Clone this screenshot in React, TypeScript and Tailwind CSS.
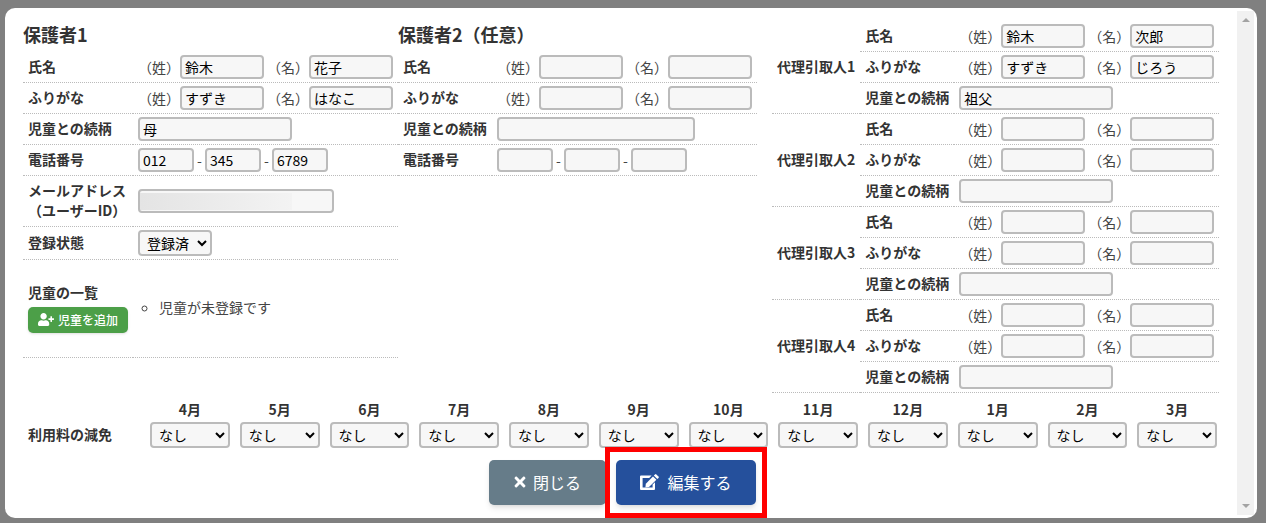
import type { ReactNode } from 'react';
import { FaTimes, FaUserPlus } from 'react-icons/fa';

type Agent = { sei: string; mei: string; seiKana: string; meiKana: string; relation: string };

const EMPTY_AGENT: Agent = { sei: '', mei: '', seiKana: '', meiKana: '', relation: '' };
const AGENTS: Agent[] = [
  { sei: '鈴木', mei: '次郎', seiKana: 'すずき', meiKana: 'じろう', relation: '祖父' },
  EMPTY_AGENT,
  EMPTY_AGENT,
  EMPTY_AGENT,
];
const MONTHS = [4, 5, 6, 7, 8, 9, 10, 11, 12, 1, 2, 3];

const field = 'h-6 rounded-sm border-2 border-[#bbb] bg-[#f7f7f7] px-[3px] text-black';
const select = 'h-[26px] rounded-sm border-2 border-[#bbb] bg-[#f7f7f7] px-[3px] text-black';
const dotted = 'border-b border-dotted border-[#bbb]';

function Th({ children, rowSpan, className = 'w-[94px]' }: { children: ReactNode; rowSpan?: number; className?: string }) {
  return (
    <th scope="row" rowSpan={rowSpan} className={`${dotted} ${className} px-[5px] pt-[3px] pb-[5px] text-left font-bold whitespace-nowrap`}>
      {children}
    </th>
  );
}

function Td({ children }: { children: ReactNode }) {
  return (
    <td className={`${dotted} px-[5px] py-[3px] text-[#444]`}>
      <div className="flex items-center">{children}</div>
    </td>
  );
}

function NameFields({ sei, mei }: { sei: string; mei: string }) {
  return (
    <div className="flex gap-[3px] whitespace-nowrap">
      <label className="flex items-center">
        （姓）
        <input type="text" defaultValue={sei} className={`${field} w-[84px]`} />
      </label>
      <label className="flex items-center">
        （名）
        <input type="text" defaultValue={mei} className={`${field} w-[84px]`} />
      </label>
    </div>
  );
}

function PhoneFields({ parts }: { parts: string[] }) {
  return (
    <div className="flex items-center">
      {parts.map((p, i) => (
        <div key={i} className="flex items-center">
          {i > 0 && <span className="w-[11px] text-center">-</span>}
          <input type="tel" aria-label={`電話番号${i + 1}`} defaultValue={p} className={`${field} w-14`} />
        </div>
      ))}
    </div>
  );
}

function EditIcon() {
  return (
    <svg width="19" height="16" viewBox="0 0 19 16" fill="currentColor">
      <path d="M1 1.5H11.6L9.2 3.9H2.6V13.6H12.6V10.6L15 8.2V15Q15 16 14 16H1Q0 16 0 15V2.5Q0 1.5 1 1.5Z" />
      <path d="M13 2.4L16.4 5.8L9 13.1L5.4 13.6L5.8 9.7Z" />
      <path d="M13.8 1.6L15 .4Q15.6-.2 16.3 .4L18.5 2.6Q19.1 3.3 18.5 3.9L17.3 5Z" />
    </svg>
  );
}

function GuardianOne() {
  return (
    <section>
      <h2 className="h-[31px] text-lg/[26px] font-bold">保護者1</h2>
      <table className="border-separate border-spacing-0">
        <tbody>
          <tr>
            <Th className="w-[110px]">氏名</Th>
            <Td><NameFields sei="鈴木" mei="花子" /></Td>
          </tr>
          <tr>
            <Th>ふりがな</Th>
            <Td><NameFields sei="すずき" mei="はなこ" /></Td>
          </tr>
          <tr>
            <Th><label htmlFor="relation1">児童との続柄</label></Th>
            <Td><input id="relation1" type="text" defaultValue="母" className={`${field} w-[154px]`} /></Td>
          </tr>
          <tr>
            <Th>電話番号</Th>
            <Td><PhoneFields parts={['012', '345', '6789']} /></Td>
          </tr>
          <tr className="h-[51px]">
            <Th><label htmlFor="email">メールアドレス<br />（ユーザーID）</label></Th>
            <Td>
              <input id="email" type="email"
                className={`${field} w-[196px] bg-linear-to-r from-[#e4e4e4] to-[#f3f3f3] bg-size-[152px_17px] bg-position-[0_2px] bg-no-repeat`} />
            </Td>
          </tr>
          <tr>
            <Th><label htmlFor="status">登録状態</label></Th>
            <Td>
              <select id="status" className={`${select} w-[74px]`}>
                <option>登録済</option>
                <option>未登録</option>
              </select>
            </Td>
          </tr>
          <tr className="h-[98px]">
            <Th>
              <div>児童の一覧</div>
              <button type="button"
                className="mt-[5px] flex h-[26px] w-[100px] items-center justify-center gap-1 rounded-[5px] bg-[#4c9f48] pb-px text-xs font-medium text-white shadow">
                <FaUserPlus size={16} className="h-[13px]" />
                児童を追加
              </button>
            </Th>
            <Td>
              <ul className="list-[circle] pb-[3px] pl-[21px]">
                <li>児童が未登録です</li>
              </ul>
            </Td>
          </tr>
        </tbody>
      </table>
    </section>
  );
}

function GuardianTwo() {
  return (
    <section className="mr-[15px]">
      <h2 className="h-[31px] text-lg/[26px] font-bold">保護者2（任意）</h2>
      <table className="border-separate border-spacing-0">
        <tbody>
          <tr>
            <Th>氏名</Th>
            <Td><NameFields sei="" mei="" /></Td>
          </tr>
          <tr>
            <Th>ふりがな</Th>
            <Td><NameFields sei="" mei="" /></Td>
          </tr>
          <tr>
            <Th><label htmlFor="relation2">児童との続柄</label></Th>
            <Td><input id="relation2" type="text" className={`${field} w-[198px]`} /></Td>
          </tr>
          <tr>
            <Th>電話番号</Th>
            <Td><PhoneFields parts={['', '', '']} /></Td>
          </tr>
        </tbody>
      </table>
    </section>
  );
}

function Agents() {
  return (
    <table className="border-separate border-spacing-0">
      {AGENTS.map((a, i) => (
        <tbody key={i}>
          <tr>
            <Th rowSpan={3} className="w-[88px]">代理引取人{i + 1}</Th>
            <Th>氏名</Th>
            <Td><NameFields sei={a.sei} mei={a.mei} /></Td>
          </tr>
          <tr>
            <Th>ふりがな</Th>
            <Td><NameFields sei={a.seiKana} mei={a.meiKana} /></Td>
          </tr>
          <tr>
            <Th><label htmlFor={`agent${i}`}>児童との続柄</label></Th>
            <Td><input id={`agent${i}`} type="text" defaultValue={a.relation} className={`${field} w-[154px]`} /></Td>
          </tr>
        </tbody>
      ))}
    </table>
  );
}

function Reductions() {
  return (
    <table className="mt-1.5 w-full table-fixed border-separate border-spacing-0">
      <thead>
        <tr>
          <td className="w-[122px]" />
          {MONTHS.map((m) => (
            <th key={m} scope="col" id={`month${m}`} className="font-bold">{m}月</th>
          ))}
        </tr>
      </thead>
      <tbody>
        <tr>
          <th scope="row" className="px-[5px] pt-[3px] pb-[5px] text-left font-bold">利用料の減免</th>
          {MONTHS.map((m) => (
            <td key={m} className="px-[5px] py-[3px]">
              <select aria-labelledby={`month${m}`} className={`${select} block w-full`}>
                <option>なし</option>
                <option>あり</option>
              </select>
            </td>
          ))}
        </tr>
      </tbody>
    </table>
  );
}

export default function App() {
  return (
    <div className="min-h-screen bg-[#808080] pt-2 pr-[9px] pb-[5px] pl-[5px] font-['Noto_Sans_CJK_JP',sans-serif] text-sm/5 text-[#333]">
      <div role="dialog" aria-label="保護者情報" className="flex rounded-[10px] bg-white p-[3px]">
        <div className="min-w-0 grow px-[15px] py-2.5">
          <div className="flex items-start">
            <GuardianOne />
            <GuardianTwo />
            <Agents />
          </div>
          <Reductions />
          <div className="mt-[9px] flex justify-center gap-2.5 text-base text-white">
            <button type="button" className="flex h-[45px] w-[117px] items-center justify-center gap-[7px] rounded-[5px] bg-[#667c89] pb-0.5 shadow-md">
              <FaTimes size={16} className="w-3" />
              閉じる
            </button>
            <div className="relative">
              <button type="button" className="flex h-[45px] w-[140px] items-center justify-center gap-2 rounded-[5px] bg-[#25509c] pb-0.5 shadow-md">
                <EditIcon />
                編集する
              </button>
              <div className="pointer-events-none absolute -inset-x-[11px] -inset-y-[13px] border-[5px] border-[#f00]" />
            </div>
          </div>
        </div>
        <div className="flex w-[17px] shrink-0 flex-col items-center justify-between bg-[#f1f1f1] py-[7px]">
          <svg width="8" height="4" viewBox="0 0 8 4" fill="#a3a3a3"><path d="M0 4L4 0L8 4Z" /></svg>
          <svg width="8" height="4" viewBox="0 0 8 4" fill="#a3a3a3"><path d="M0 0H8L4 4Z" /></svg>
        </div>
      </div>
    </div>
  );
}
